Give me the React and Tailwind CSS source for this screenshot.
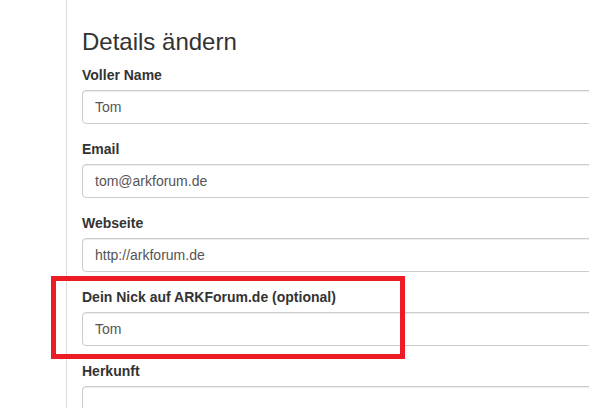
import React from "react";

const fields = [
  { label: "Voller Name", value: "Tom" },
  { label: "Email", value: "tom@arkforum.de" },
  { label: "Webseite", value: "http://arkforum.de" },
  { label: "Dein Nick auf ARKForum.de (optional)", value: "Tom" },
  { label: "Herkunft", value: "" },
];

export default function App() {
  return (
    <div
      className="relative flex h-[408px] w-[589px] overflow-hidden bg-white text-[#333]"
      style={{ fontFamily: '"Liberation Sans", Arial, sans-serif' }}
    >
      <div className="w-[67px] shrink-0 border-r border-[#dddddd]" />
      <div className="shrink-0 pl-[15px] pt-[29px] w-[620px]">
        <h3 className="mb-[10px] text-[24px] leading-[26.4px] font-normal text-[#333]">
          Details ändern
        </h3>
        {fields.map((f) => (
          <div key={f.label} className="mb-[15px]">
            <label className="mb-[5px] block text-[14px] font-bold leading-[20px] text-[#333]">
              {f.label}
            </label>
            <div className="flex h-[34px] w-[600px] items-center rounded-[4px] border border-[#cccccc] px-[12px] text-[14px] text-[#555] shadow-[inset_0_1px_1px_rgba(0,0,0,0.075)]">
              {f.value}
            </div>
          </div>
        ))}
      </div>
      <div className="pointer-events-none absolute left-[51px] top-[276px] h-[83px] w-[354px] border-[5px] border-[#ed1c24]" />
    </div>
  );
}
